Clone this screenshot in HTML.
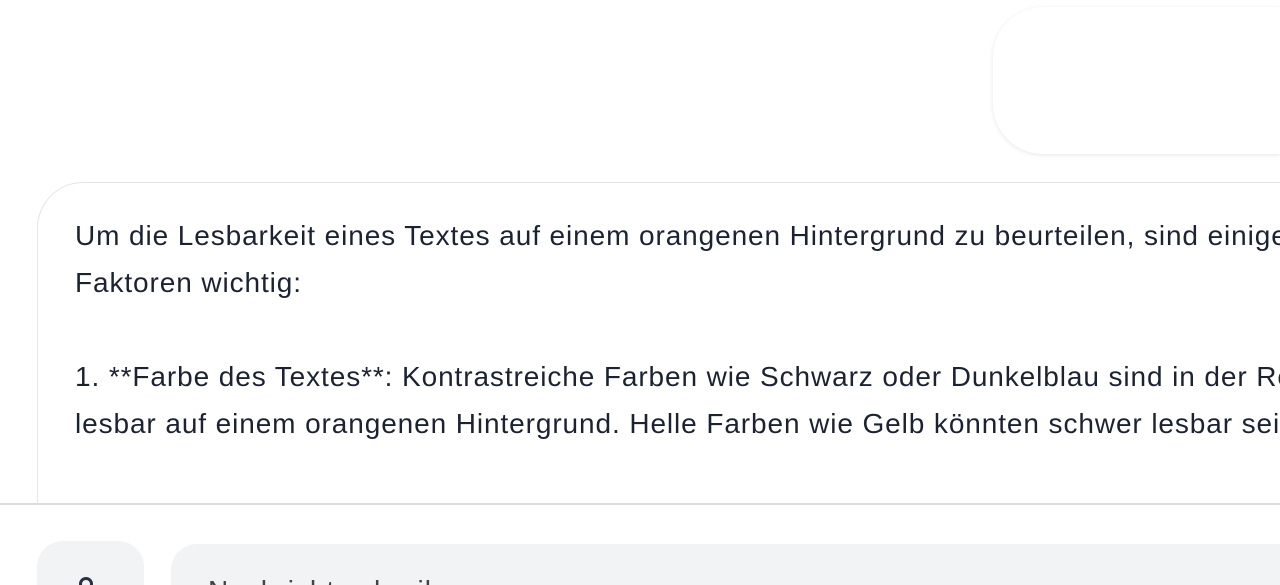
<!DOCTYPE html>
<html><head><meta charset="utf-8"><style>
html,body{margin:0;padding:0;width:1280px;height:585px;overflow:hidden;background:#fff;font-family:"Liberation Sans",sans-serif;position:relative;}
.top{position:absolute;left:993px;top:7px;width:287px;height:147px;border-radius:50px 0 0 50px;background:#fff;box-shadow:0 1px 4px rgba(0,0,0,0.10);}
.resp{position:absolute;left:37px;top:182px;width:1243px;height:321px;border:1.5px solid #e4e4ea;border-right:none;border-bottom:none;border-radius:46px 0 0 0;background:#fff;box-sizing:border-box;}
.txt{position:absolute;left:75px;top:212px;width:1205px;overflow:hidden;font-size:28px;line-height:47px;color:#1b2333;white-space:nowrap;letter-spacing:0.9px;}
.footer{position:absolute;left:0;top:503px;width:1280px;height:82px;background:#fff;border-top:2px solid #dcdcdf;box-sizing:border-box;}
.btn{position:absolute;left:37px;top:541px;width:107px;height:44px;border-radius:26px 26px 0 0;background:#f2f3f5;overflow:hidden;}
.inp{position:absolute;left:171px;top:544px;width:1109px;height:41px;border-radius:26px 0 0 0;background:#f2f3f5;overflow:hidden;}
.ph{position:absolute;left:37px;top:31px;font-size:28px;color:#444;letter-spacing:1px;white-space:nowrap;}
</style></head><body>
<div class="top"></div>
<div class="resp"></div>
<div class="txt">Um die Lesbarkeit eines Textes auf einem orangenen Hintergrund zu beurteilen, sind einige<br>Faktoren wichtig:<br><br>1. **Farbe des Textes**: Kontrastreiche Farben wie Schwarz oder Dunkelblau sind in der Regel gut<br>lesbar auf einem orangenen Hintergrund. Helle Farben wie Gelb könnten schwer lesbar sein.</div>
<div class="footer"></div>
<div class="btn"><svg style="position:absolute;left:40px;top:35px" width="28" height="28" viewBox="0 0 28 28"><circle cx="9" cy="8" r="5.5" fill="none" stroke="#2a3142" stroke-width="3"/></svg></div>
<div class="inp"><div class="ph">Nachricht schreiben</div></div>
</body></html>
